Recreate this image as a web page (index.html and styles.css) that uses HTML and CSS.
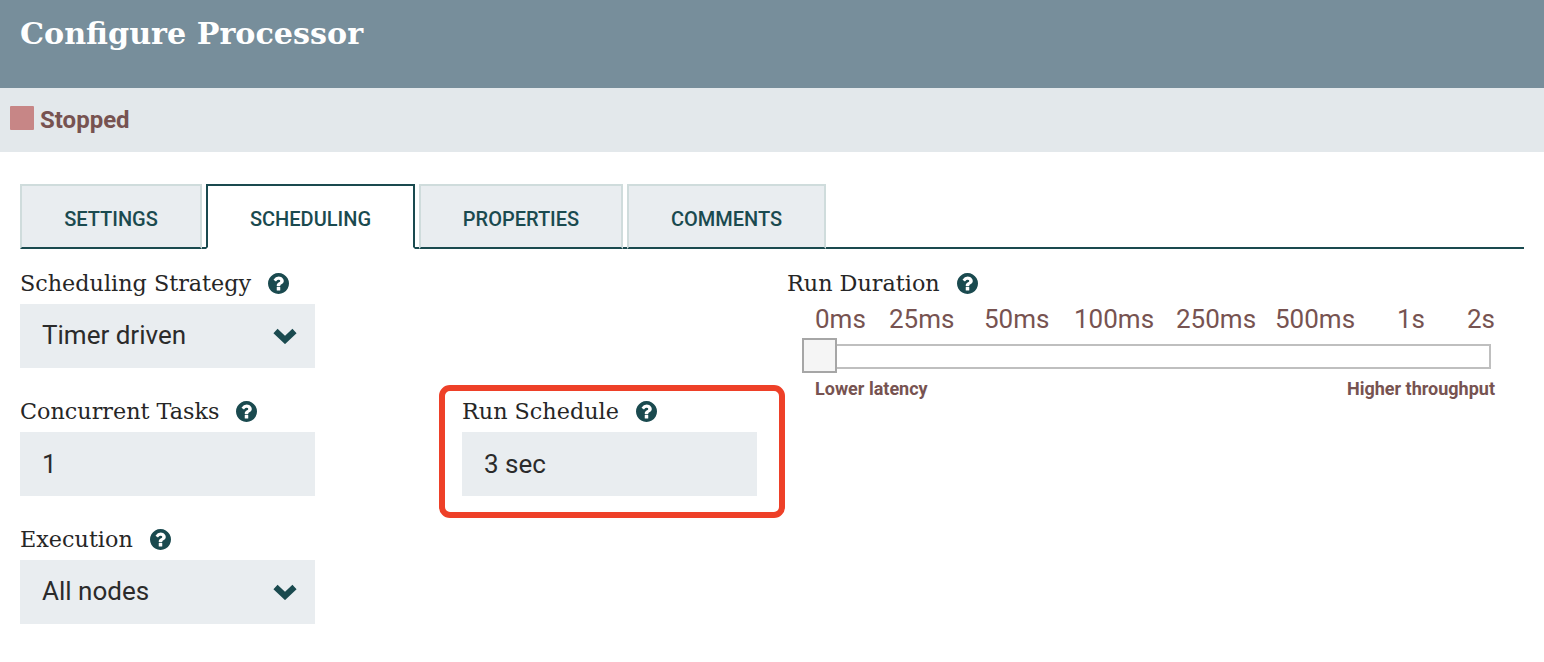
FILE: index.html
```html
<!DOCTYPE html>
<html lang="en">
<head>
<meta charset="utf-8">
<title>Configure Processor</title>
<link rel="stylesheet" href="styles.css">
</head>
<body>
<header class="header"><h1 class="title">Configure Processor</h1></header>
<div class="status"><span class="status-icon"></span><span class="status-text">Stopped</span></div>
<main class="content">
  <nav class="tabs">
    <div class="tab tab-settings">SETTINGS</div>
    <div class="tab tab-scheduling active">SCHEDULING</div>
    <div class="tab tab-properties">PROPERTIES</div>
    <div class="tab tab-comments">COMMENTS</div>
  </nav>
  <div class="form">
    <section class="field strategy">
      <div class="label"><span>Scheduling Strategy</span><svg class="help" viewBox="128 128 1536 1536"><path d="M1024 1376v-192q0-14-9-23t-23-9h-192q-14 0-23 9t-9 23v192q0 14 9 23t23 9h192q14 0 23-9t9-23zm256-672q0-88-55.500-163t-138.500-116-170-41q-243 0-371 213-15 24 8 42l132 100q7 6 19 6 16 0 25-12 53-68 86-92 34-24 86-24 48 0 85.500 26t37.500 59q0 38-20 61t-68 45q-63 28-115.500 86.500t-52.500 125.500v36q0 14 9 23t23 9h192q14 0 23-9t9-23q0-19 21.500-49.500t54.500-49.500q32-18 49-28.500t46-35 44.500-48 28-60.500 12.500-81zm384 192q0 209-103 385.500t-279.500 279.500-385.500 103-385.500-103-279.500-279.500-103-385.500 103-385.500 279.500-279.500 385.500-103 385.500 103 279.500 279.500 103 385.500z"/></svg></div>
      <div class="input"><span>Timer driven</span><svg class="chevron" viewBox="0 0 24 16"><polyline points="2.500,3 12,12 21.500,3"/></svg></div>
    </section>
    <section class="field duration">
      <div class="label"><span>Run Duration</span><svg class="help" viewBox="128 128 1536 1536"><path d="M1024 1376v-192q0-14-9-23t-23-9h-192q-14 0-23 9t-9 23v192q0 14 9 23t23 9h192q14 0 23-9t9-23zm256-672q0-88-55.500-163t-138.500-116-170-41q-243 0-371 213-15 24 8 42l132 100q7 6 19 6 16 0 25-12 53-68 86-92 34-24 86-24 48 0 85.500 26t37.500 59q0 38-20 61t-68 45q-63 28-115.500 86.500t-52.500 125.500v36q0 14 9 23t23 9h192q14 0 23-9t9-23q0-19 21.500-49.500t54.500-49.500q32-18 49-28.500t46-35 44.500-48 28-60.500 12.500-81zm384 192q0 209-103 385.500t-279.500 279.500-385.500 103-385.500-103-279.500-279.500-103-385.500 103-385.500 279.500-279.500 385.500-103 385.500 103 279.500 279.500 103 385.500z"/></svg></div>
      <div class="ticks"><span>0ms</span><span>25ms</span><span>50ms</span><span>100ms</span><span>250ms</span><span>500ms</span><span>1s</span><span>2s</span></div>
      <div class="slider"><div class="thumb"></div></div>
      <div class="hints"><span>Lower latency</span><span>Higher throughput</span></div>
    </section>
    <section class="field tasks">
      <div class="label"><span>Concurrent Tasks</span><svg class="help" viewBox="128 128 1536 1536"><path d="M1024 1376v-192q0-14-9-23t-23-9h-192q-14 0-23 9t-9 23v192q0 14 9 23t23 9h192q14 0 23-9t9-23zm256-672q0-88-55.500-163t-138.500-116-170-41q-243 0-371 213-15 24 8 42l132 100q7 6 19 6 16 0 25-12 53-68 86-92 34-24 86-24 48 0 85.500 26t37.500 59q0 38-20 61t-68 45q-63 28-115.500 86.500t-52.500 125.500v36q0 14 9 23t23 9h192q14 0 23-9t9-23q0-19 21.500-49.500t54.500-49.500q32-18 49-28.500t46-35 44.500-48 28-60.500 12.500-81zm384 192q0 209-103 385.500t-279.500 279.500-385.500 103-385.500-103-279.500-279.500-103-385.500 103-385.500 279.500-279.500 385.500-103 385.500 103 279.500 279.500 103 385.500z"/></svg></div>
      <div class="input"><span class="input-value">1</span></div>
    </section>
    <section class="field schedule">
      <div class="highlight"></div>
      <div class="label"><span>Run Schedule</span><svg class="help" viewBox="128 128 1536 1536"><path d="M1024 1376v-192q0-14-9-23t-23-9h-192q-14 0-23 9t-9 23v192q0 14 9 23t23 9h192q14 0 23-9t9-23zm256-672q0-88-55.500-163t-138.500-116-170-41q-243 0-371 213-15 24 8 42l132 100q7 6 19 6 16 0 25-12 53-68 86-92 34-24 86-24 48 0 85.500 26t37.500 59q0 38-20 61t-68 45q-63 28-115.500 86.500t-52.500 125.500v36q0 14 9 23t23 9h192q14 0 23-9t9-23q0-19 21.500-49.500t54.500-49.500q32-18 49-28.500t46-35 44.500-48 28-60.500 12.500-81zm384 192q0 209-103 385.500t-279.500 279.500-385.500 103-385.500-103-279.500-279.500-103-385.500 103-385.500 279.500-279.500 385.500-103 385.500 103 279.500 279.500 103 385.500z"/></svg></div>
      <div class="input"><span class="input-value">3 sec</span></div>
    </section>
    <section class="field execution">
      <div class="label"><span>Execution</span><svg class="help" viewBox="128 128 1536 1536"><path d="M1024 1376v-192q0-14-9-23t-23-9h-192q-14 0-23 9t-9 23v192q0 14 9 23t23 9h192q14 0 23-9t9-23zm256-672q0-88-55.500-163t-138.500-116-170-41q-243 0-371 213-15 24 8 42l132 100q7 6 19 6 16 0 25-12 53-68 86-92 34-24 86-24 48 0 85.500 26t37.500 59q0 38-20 61t-68 45q-63 28-115.500 86.500t-52.500 125.500v36q0 14 9 23t23 9h192q14 0 23-9t9-23q0-19 21.500-49.500t54.500-49.500q32-18 49-28.500t46-35 44.500-48 28-60.500 12.500-81zm384 192q0 209-103 385.500t-279.500 279.500-385.500 103-385.500-103-279.500-279.500-103-385.500 103-385.500 279.500-279.500 385.500-103 385.500 103 279.500 279.500 103 385.500z"/></svg></div>
      <div class="input"><span>All nodes</span><svg class="chevron" viewBox="0 0 24 16"><polyline points="2.500,3 12,12 21.500,3"/></svg></div>
    </section>
  </div>
</main>
</body>
</html>
```
FILE: styles.css
```css
* { box-sizing: border-box; }
html, body { margin: 0; padding: 0; height: 662px; overflow: hidden; background: #fff; }
body { font-family: Roboto, sans-serif; color: #262626; }

.header { height: 88px; background: #778e9b; padding: 14px 20px 0; }
.title { margin: 0; font-family: "DejaVu Serif", serif; font-weight: 700; font-size: 30.200px; line-height: 40px; color: #fff; }

.status { height: 64px; background: #e3e8eb; display: flex; align-items: center; padding-left: 10px; gap: 6px; }
.status-icon { width: 24px; height: 24px; background: #c78686; border-radius: 1px; margin-top: -4px; }
.status-text { font-weight: 700; font-size: 24px; color: #775351; margin-top: -1px; }

.content { padding: 32px 20px 0; }

.tabs { display: flex; gap: 4px; height: 65px; border-bottom: 2px solid #1a4a4f; width: 1504px; }
.tab { height: 65px; background: #e9edf0; border: 2px solid #cfdcdc; border-bottom: 2px solid #1a4a4f; font-weight: 500; font-size: 20px; color: #1a4a4f; display: flex; align-items: center; justify-content: center; padding-top: 5px; }
.tab-settings { width: 182px; }
.tab-scheduling { width: 209px; }
.tab-properties { width: 204px; }
.tab-comments { width: 199px; }
.tab.active { background: #fff; border-color: #1a4a4f; border-bottom-color: #fff; }

.form { display: grid; grid-template-columns: 442px 325px 737px; grid-template-rows: repeat(3, 128px); grid-template-areas: "a . d" "b c ." "e . ."; margin-top: 19px; }
.strategy { grid-area: a; }
.duration { grid-area: d; }
.tasks { grid-area: b; }
.schedule { grid-area: c; position: relative; }
.execution { grid-area: e; }

.field { display: block; min-width: 0; }
.label { display: flex; align-items: center; gap: 17px; height: 36px; padding-bottom: 6px; font-family: "DejaVu Serif", serif; font-size: 22.300px; color: #262626; white-space: nowrap; }
.help { width: 21px; height: 21px; fill: #1a4a4f; flex: none; }
.input { width: 295px; height: 64px; background: #e9edf0; display: flex; align-items: center; justify-content: space-between; padding: 0 18px 0 22px; font-size: 26px; color: #2b2b2b; }
.input span { margin-top: -2px; }
.input .input-value { margin-top: 0; }
.chevron { width: 24px; height: 16px; fill: none; stroke: #1a4a4f; stroke-width: 6; }

.highlight { position: absolute; left: -23px; top: -11px; width: 346px; height: 133px; border: 6px solid #ee4028; border-radius: 11px; pointer-events: none; }

.ticks { display: grid; grid-template-columns: 74px 95px 90px 102px 99px 122px 70px auto; padding-left: 28px; height: 38px; font-size: 26px; color: #775351; line-height: 30px; white-space: nowrap; }
.slider { position: relative; width: 688px; height: 25px; margin-left: 16px; margin-top: 2px; border: 2px solid #bfbfbf; background: #fff; }
.thumb { position: absolute; left: -3px; top: -8px; width: 35px; height: 35px; border: 2px solid #a6a6a6; background: #f5f5f5; }
.hints { display: flex; justify-content: space-between; width: 680px; margin-left: 28px; margin-top: 9px; font-weight: 700; font-size: 18px; color: #775351; }
```
